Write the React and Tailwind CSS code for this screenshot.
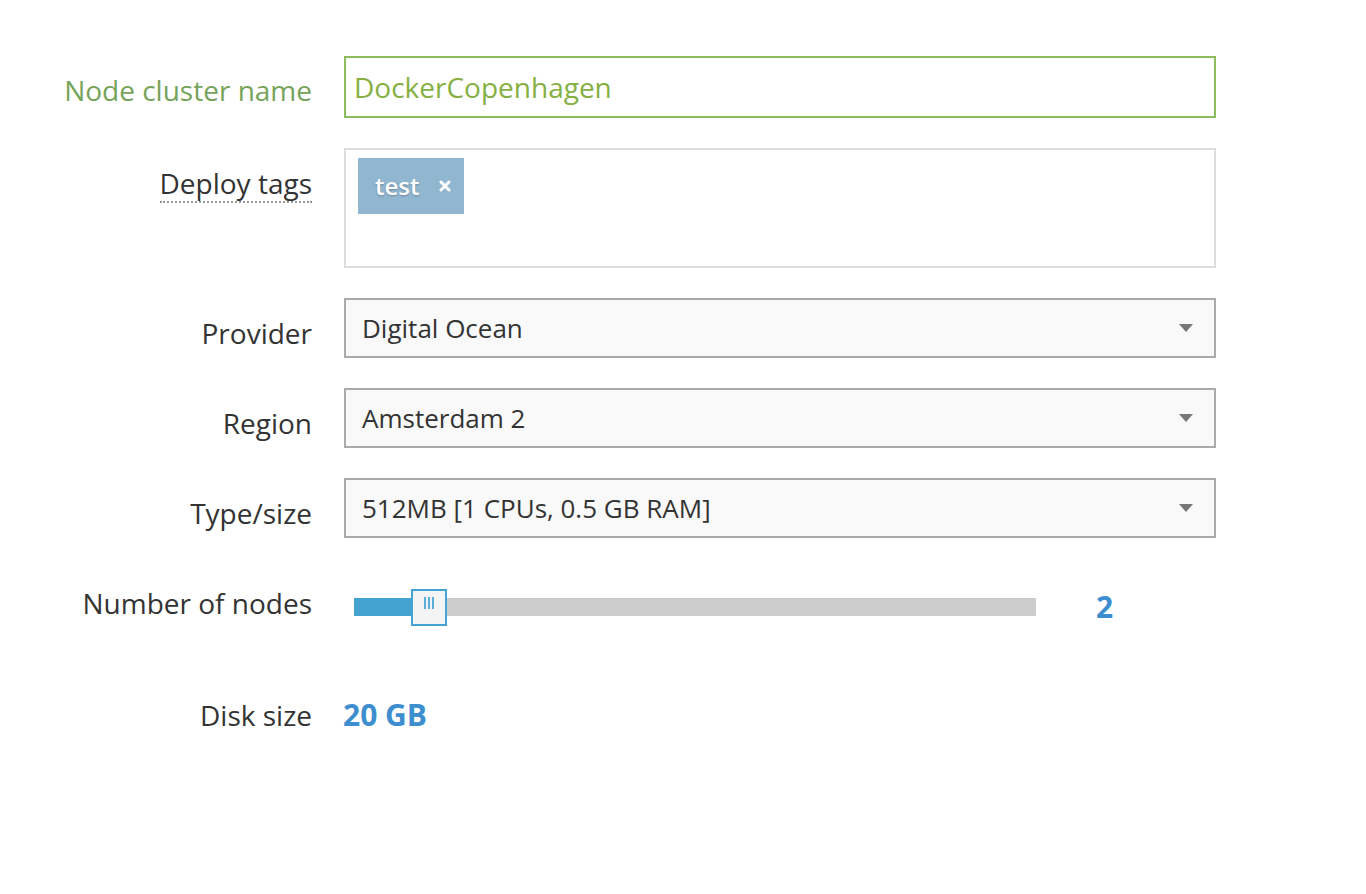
const font = { fontFamily: '"Open Sans", "Liberation Sans", sans-serif' };

function Label({ children, green, dotted, className = '' }) {
  return (
    <div className={`flex items-start justify-end text-[28px] leading-[32px] ${green ? 'text-[#76a35a]' : 'text-[#333333]'} ${className}`}>
      <span className={dotted ? 'border-b-2 border-dotted border-[#999999] pb-[2px]' : ''}>{children}</span>
    </div>
  );
}

function Caret() {
  return (
    <svg width="16" height="10" viewBox="0 0 16 10" className="shrink-0">
      <path d="M1 1 L15 1 L8 9 Z" fill="#777777" />
    </svg>
  );
}

function Select({ value }) {
  return (
    <div className="h-[60px] border-2 border-[#aaaaaa] bg-[#f9f9f9] flex items-center justify-between pl-[16px] pr-[20px] text-[26px] text-[#333333]">
      <span>{value}</span>
      <Caret />
    </div>
  );
}

export default function App() {
  return (
    <div className="min-h-[894px] bg-white" style={font}>
      <div className="grid grid-cols-[312px_872px] gap-x-[32px] pt-[56px]">
        {/* Node cluster name */}
        <Label green className="pt-[18px]">Node cluster name</Label>
        <div className="h-[62px] border-2 border-[#8dbd5a] flex items-center pl-[8px] text-[28px] text-[#86b043]">
          DockerCopenhagen
        </div>

        {/* Deploy tags */}
        <Label dotted className="pt-[19px] mt-[30px]">Deploy tags</Label>
        <div className="h-[120px] mt-[30px] border-2 border-[#dddddd] p-[8px] pl-[12px]">
          <div className="inline-flex items-center h-[56px] pl-[17px] pr-[13px] bg-[#91b6cf] text-white text-[24px] font-semibold gap-[19px]" style={{ textShadow: '0 1px 2px rgba(0,0,0,0.25)' }}>
            <span>test</span>
            <svg width="12" height="12" viewBox="0 0 12 12">
              <path d="M2 2 L10 10 M10 2 L2 10" stroke="white" strokeWidth="3" strokeLinecap="round" />
            </svg>
          </div>
        </div>

        {/* Provider */}
        <Label className="pt-[19px] mt-[30px]">Provider</Label>
        <div className="mt-[30px]"><Select value="Digital Ocean" /></div>

        {/* Region */}
        <Label className="pt-[19px] mt-[30px]">Region</Label>
        <div className="mt-[30px]"><Select value="Amsterdam 2" /></div>

        {/* Type/size */}
        <Label className="pt-[19px] mt-[30px]">Type/size</Label>
        <div className="mt-[30px]"><Select value="512MB [1 CPUs, 0.5 GB RAM]" /></div>

        {/* Number of nodes */}
        <Label className="mt-[49px]">Number of nodes</Label>
        <div className="mt-[50px] flex items-center h-[37px]">
          <div className="relative ml-[10px] w-[682px] h-[18px] bg-[#cccccc]">
            <div className="absolute left-0 top-0 h-full w-[60px] bg-[#44a3d1]" />
            <div className="absolute left-[57px] top-[-9px] w-[36px] h-[37px] border-2 border-[#44a3d1] bg-[#f4f4f4] flex justify-center pt-[6px] gap-[2px]">
              <div className="w-[2px] h-[12px] bg-[#5aaedb]" />
              <div className="w-[2px] h-[12px] bg-[#5aaedb]" />
              <div className="w-[2px] h-[12px] bg-[#5aaedb]" />
            </div>
          </div>
          <span className="ml-[60px] text-[30px] font-bold leading-[32px] text-[#3d8ecf]">2</span>
        </div>

        {/* Disk size */}
        <Label className="mt-[74px]">Disk size</Label>
        <div className="mt-[74px] -ml-[1px] text-[30px] font-bold leading-[32px] text-[#3d8ecf]">20 GB</div>
      </div>
    </div>
  );
}
